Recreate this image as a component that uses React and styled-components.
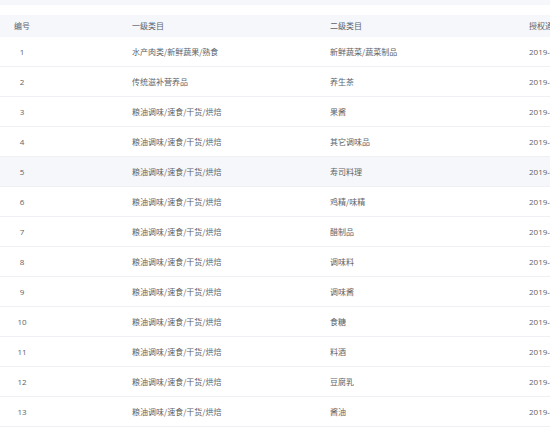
import React from "react";
import styled, { createGlobalStyle } from "styled-components";

const Global = createGlobalStyle`
  html, body { margin: 0; padding: 0; background: #fff; overflow: hidden; }
  body { font-family: "Noto Sans CJK SC", "Noto Sans", sans-serif; }
`;

const Page = styled.div`
  width: 550px;
  height: 434px;
  overflow: hidden;
  display: flex;
  flex-direction: column;
`;

const TopStrip = styled.div`
  height: 5px;
  background: #f5f7fa;
  margin-bottom: 10px;
`;

const Table = styled.div`
  display: flex;
  flex-direction: column;
  width: 720px;
`;

const Row = styled.div`
  display: grid;
  grid-template-columns: 132px 198px 199px 191px;
  align-items: center;
  height: ${(p) => (p.$head ? "22px" : "30px")};
  box-sizing: border-box;
  background: ${(p) => (p.$head || p.$hover ? "#f5f7fa" : "#fff")};
  border-bottom: ${(p) => (p.$head ? "none" : "1px solid #eef0f4")};
  font-size: 8px;
  color: ${(p) => (p.$head ? "#5f6268" : "#606266")};
  white-space: nowrap;
`;

const Cell = styled.div`
  overflow: hidden;
  line-height: 12px;
`;

const IdCell = styled(Cell)`
  width: 44px;
  text-align: center;
  justify-self: start;
  font-family: "Open Sans", "Noto Sans CJK SC", sans-serif;
`;

const DateCell = styled(Cell)`
  font-family: "Open Sans", "Noto Sans CJK SC", sans-serif;
`;

const rows = [
  ["水产肉类/新鲜蔬果/熟食", "新鲜蔬菜/蔬菜制品"],
  ["传统滋补营养品", "养生茶"],
  ["粮油调味/速食/干货/烘焙", "果酱"],
  ["粮油调味/速食/干货/烘焙", "其它调味品"],
  ["粮油调味/速食/干货/烘焙", "寿司料理"],
  ["粮油调味/速食/干货/烘焙", "鸡精/味精"],
  ["粮油调味/速食/干货/烘焙", "醋制品"],
  ["粮油调味/速食/干货/烘焙", "调味料"],
  ["粮油调味/速食/干货/烘焙", "调味酱"],
  ["粮油调味/速食/干货/烘焙", "食糖"],
  ["粮油调味/速食/干货/烘焙", "料酒"],
  ["粮油调味/速食/干货/烘焙", "豆腐乳"],
  ["粮油调味/速食/干货/烘焙", "酱油"],
];

export default function App() {
  return (
    <Page>
      <Global />
      <TopStrip />
      <Table>
        <Row $head>
          <IdCell style={{ fontFamily: '"Noto Sans CJK SC", sans-serif' }}>编号</IdCell>
          <Cell>一级类目</Cell>
          <Cell>二级类目</Cell>
          <Cell>授权通过时间</Cell>
        </Row>
        {rows.map((r, i) => (
          <Row key={i} $hover={i === 4}>
            <IdCell>{i + 1}</IdCell>
            <Cell>{r[0]}</Cell>
            <Cell>{r[1]}</Cell>
            <DateCell>2019-03-28 10:20:31</DateCell>
          </Row>
        ))}
      </Table>
    </Page>
  );
}
